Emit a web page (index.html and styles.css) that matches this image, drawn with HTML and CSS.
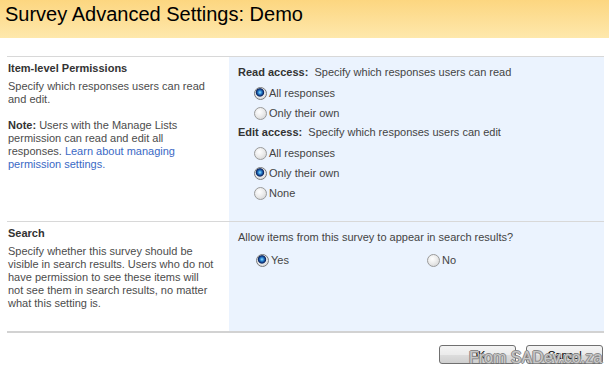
FILE: index.html
```html
<!DOCTYPE html>
<html lang="en">
<head>
    <meta charset="UTF-8">
    <title>Survey Advanced Settings: Demo</title>
    <link rel="stylesheet" href="styles.css">
</head>
<body>
    <div class="title-bar">
        <h1>Survey Advanced Settings: Demo</h1>
    </div>

    <form class="settings">
        <div class="section">
            <div class="section-desc">
                <h3>Item-level Permissions</h3>
                <p>Specify which responses users can read<br>and edit.</p>
                <p><b>Note:</b> Users with the Manage Lists<br>permission can read and edit all<br>responses. <a href="#">Learn about managing<br>permission settings.</a></p>
            </div>
            <div class="section-ctrl">
                <div class="group-label"><b>Read access:</b>&nbsp; Specify which responses users can read</div>
                <label class="option"><input type="radio" name="read" checked>All responses</label>
                <label class="option"><input type="radio" name="read">Only their own</label>

                <div class="group-label group-next"><b>Edit access:</b>&nbsp; Specify which responses users can edit</div>
                <label class="option"><input type="radio" name="edit">All responses</label>
                <label class="option"><input type="radio" name="edit" checked>Only their own</label>
                <label class="option"><input type="radio" name="edit">None</label>
            </div>
        </div>

        <div class="section">
            <div class="section-desc desc-last">
                <h3>Search</h3>
                <p>Specify whether this survey should be<br>visible in search results. Users who do not<br>have permission to see these items will<br>not see them in search results, no matter<br>what this setting is.</p>
            </div>
            <div class="section-ctrl">
                <div class="group-label">Allow items from this survey to appear in search results?</div>
                <div class="inline-options">
                    <label class="option option-yes"><input type="radio" name="search" checked>Yes</label>
                    <label class="option"><input type="radio" name="search">No</label>
                </div>
            </div>
        </div>

        <div class="actions">
            <button type="button">OK</button>
            <button type="button">Cancel</button>
        </div>
    </form>

    <div class="watermark">From SADev.co.za</div>
</body>
</html>
```

FILE: styles.css
```css
body {
    margin: 0;
    font-family: 'Liberation Sans', Arial, sans-serif;
    font-size: 11px;
    color: #4c4c4c;
    background: #fff;
    width: 609px;
    height: 371px;
    overflow: hidden;
    position: relative;
}
.title-bar {
    height: 38px;
    background: linear-gradient(to bottom, #fcd680, #fee8ac);
    padding-left: 5px;
}
h1 {
    margin: 0;
    font-family: 'Liberation Sans', Arial, sans-serif;
    font-weight: normal;
    font-size: 20px;
    line-height: 28px;
    color: #000;
}
.settings {
    margin: 18px 5px 0 7px;
    border-top: 1px solid #d8d8d8;
}
.section {
    display: flex;
}
.section + .section {
    border-top: 1px solid #d8d8d8;
}
.section-desc {
    width: 210px;
    padding: 5px 11px 0 1px;
    line-height: 13px;
    white-space: nowrap;
}
.desc-last {
    padding-bottom: 21px;
}
.section-desc h3 {
    margin: 0 0 5px;
    font-size: 11px;
    color: #333;
}
.section-desc p {
    margin: 0 0 13px;
}
.section-desc p:last-child {
    margin-bottom: 0;
}
.section-desc a {
    color: #3a69c5;
    text-decoration: none;
}
.section-desc b {
    color: #333;
}
.section-ctrl {
    flex: 1;
    background: #ebf3fe;
    padding: 8px 8px 18px 9px;
}
.group-label {
    line-height: 14px;
    margin-bottom: 4px;
    color: #444;
}
.group-label b {
    color: #333;
}
.group-next {
    margin-top: 2px;
}
.option {
    display: flex;
    align-items: center;
    height: 20px;
    padding-left: 16px;
    color: #444;
}
.option input {
    appearance: none;
    -webkit-appearance: none;
    width: 13px;
    height: 13px;
    margin: 0 2px 0 0;
    border: 1px solid #9a9a9a;
    border-radius: 50%;
    background: radial-gradient(circle at 40% 35%, #fff 0, #ececec 45%, #cfcfcf 100%);
    box-sizing: border-box;
}
.option input:checked {
    border-color: #7a7a7a;
    background: radial-gradient(circle at 45% 40%, #9fdcff 0, #2f8fd8 18%, #14408a 34%, #0b2660 42%, #e9e9e9 52%, #cdcdcd 100%);
}
.inline-options {
    display: flex;
    margin-top: 6px;
}
.option-yes {
    width: 155px;
    padding-left: 18px;
}
.actions {
    border-top: 2px solid #d2d2d2;
    display: flex;
    justify-content: flex-end;
    gap: 10px;
    padding: 12px 1px 0 0;
}
.actions button {
    width: 77px;
    height: 19px;
    padding: 0;
    font-family: 'Liberation Sans', Arial, sans-serif;
    font-size: 11px;
    color: #000;
    border: 1px solid #707070;
    border-radius: 3px;
    background: linear-gradient(to bottom, #f4f4f4 0, #ebebeb 50%, #dddddd 51%, #cfcfcf 100%);
}
.watermark {
    position: absolute;
    left: 469px;
    top: 349px;
    white-space: nowrap;
    font-family: 'Liberation Sans', Arial, sans-serif;
    font-size: 16px;
    color: rgba(255, 255, 255, 0.55);
    text-shadow: -1px 0 #8a8a8a, 1px 0 #8a8a8a, 0 -1px #8a8a8a, 0 1px #8a8a8a;
}
```
